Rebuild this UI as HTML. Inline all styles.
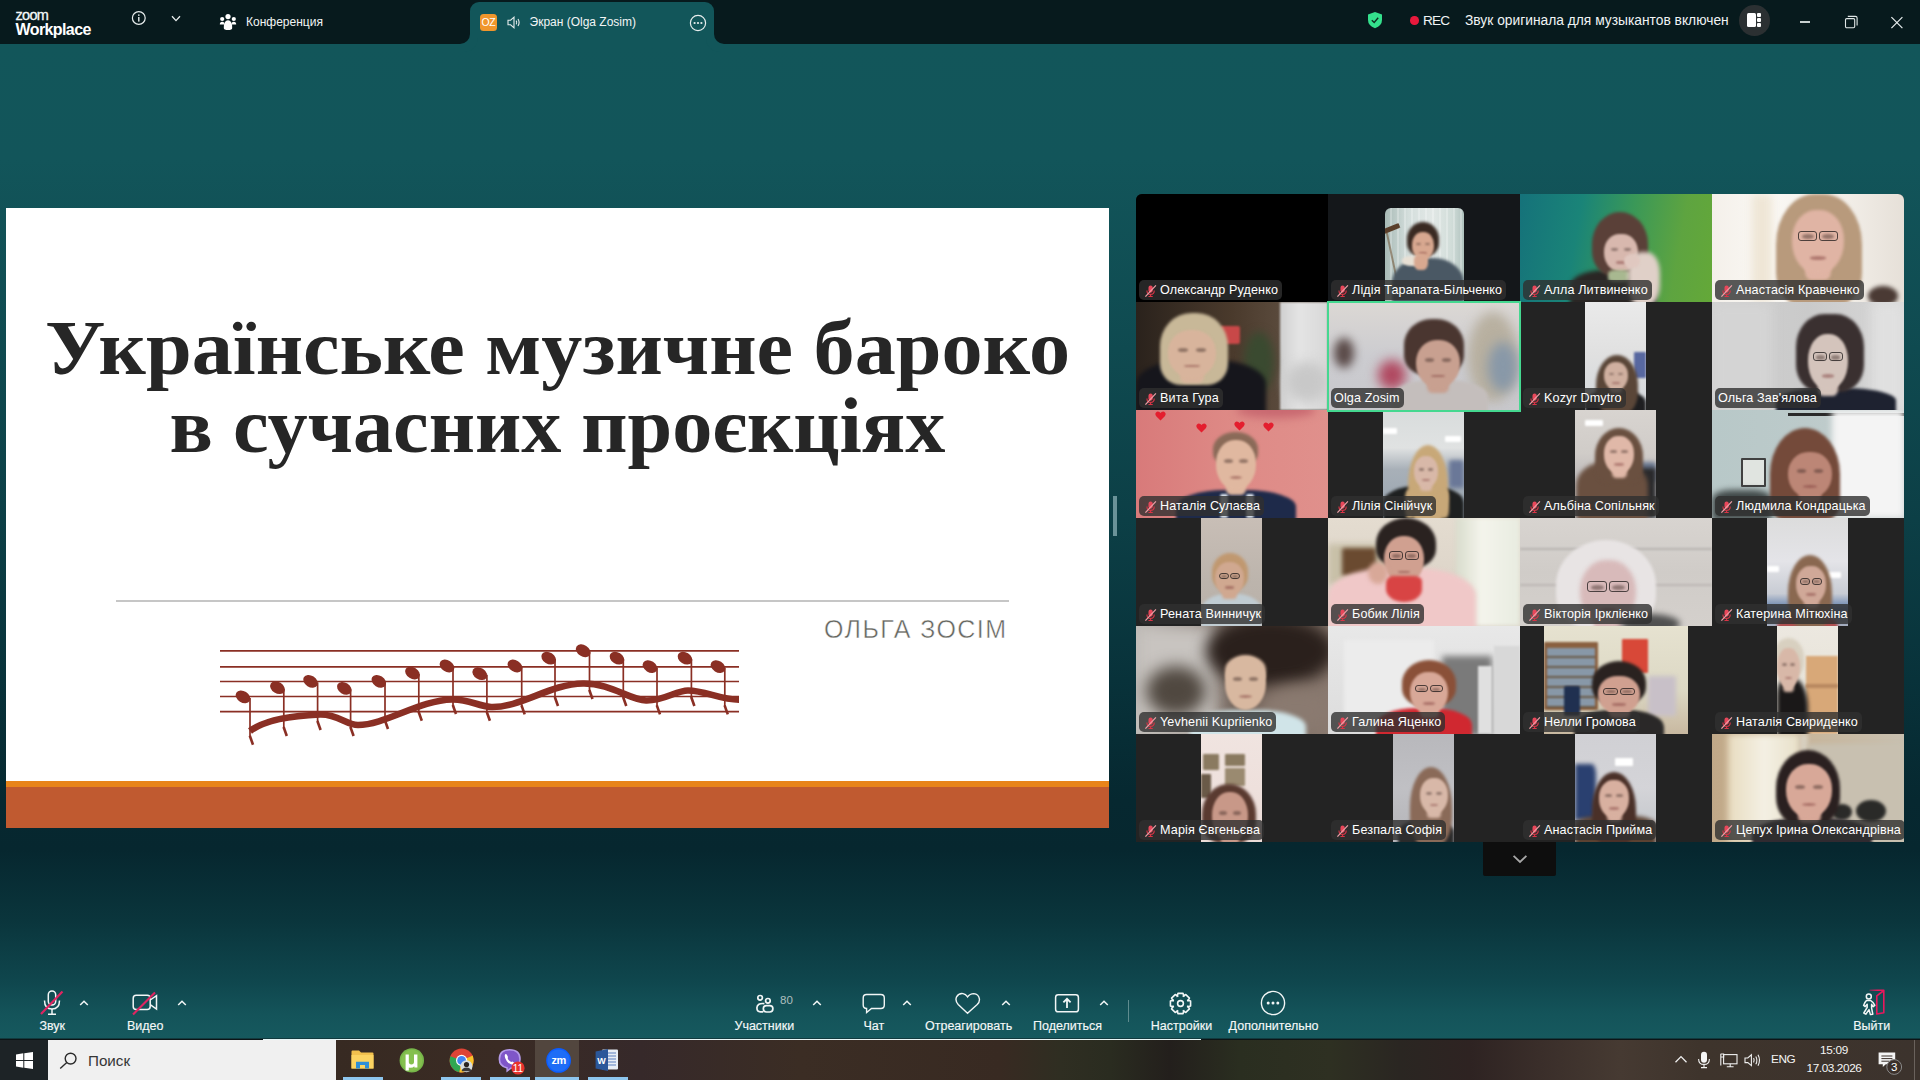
<!DOCTYPE html>
<html><head><meta charset="utf-8">
<style>
*{margin:0;padding:0;box-sizing:border-box}
html,body{width:1920px;height:1080px;overflow:hidden}
body{position:relative;font-family:"Liberation Sans",sans-serif;color:#fff;
background:linear-gradient(to bottom,#071a1d 0,#071a1d 44px,#12565a 44px,#12555a 160px,#0f4a50 350px,#0c3f46 520px,#08323a 680px,#062830 800px,#06272f 850px,#0a353c 920px,#0f464d 980px,#14545a 1015px,#16595e 1038px,#0d1b1e 1039px)}
.abs{position:absolute}
/* title bar */
#tb{left:0;top:0;width:1920px;height:44px;background:#071a1d}
#tab{left:470px;top:2px;width:244px;height:42px;background:#12565a;border-radius:9px 9px 0 0}
#tab:before,#tab:after{content:"";position:absolute;bottom:0;width:10px;height:10px;background:transparent}
#tab:before{left:-10px;border-bottom-right-radius:10px;box-shadow:4px 4px 0 4px #12565a}
#tab:after{right:-10px;border-bottom-left-radius:10px;box-shadow:-4px 4px 0 4px #12565a}
.t12{font-size:12px;line-height:14px;white-space:nowrap}
/* slide */
#slide{left:6px;top:208px;width:1103px;height:620px;background:#fff;overflow:hidden}
.tl1{font-family:"Liberation Serif",serif;font-weight:bold;color:#262626;text-align:center;white-space:nowrap}
#title{left:0;top:0;width:1103px;font-family:"Liberation Serif",serif;font-weight:bold;color:#262626;text-align:center;white-space:nowrap}
/* grid */
#grid{left:1136px;top:194px;width:768px;height:648px;border-radius:6px 6px 0 0;overflow:hidden;background:#222}
.tile{position:absolute;width:192px;height:108px;overflow:hidden}
.s{position:absolute}
.vid{position:absolute;top:0;height:108px;overflow:hidden}
.lbl{position:absolute;left:3px;top:86px;height:19.5px;background:rgba(48,48,48,.8);border-radius:5px;padding:0 4px 0 21px;font-size:12.6px;line-height:21px;letter-spacing:0.12px;color:#fff;white-space:nowrap}
.lbl.nm{padding-left:3px}
.mic{position:absolute;left:3px;top:2.5px;transform:scale(.85)}
/* toolbar */
.tl{font-size:12.5px;line-height:14px;-webkit-text-stroke:0.15px #f4f8f8;text-align:center;white-space:nowrap;color:#f4f8f8}
/* taskbar */
#task{left:0;top:1040px;width:1920px;height:40px;background:#352b24}
</style></head><body>
<div id="tb" class="abs">
<div class="abs" style="left:15.5px;top:7px;font-size:14.5px;line-height:16px;font-weight:normal;letter-spacing:-0.7px;color:#f4f8f8;-webkit-text-stroke:0.3px #f4f8f8">zoom</div>
<div class="abs" style="left:15.5px;top:20px;font-size:16px;line-height:20px;font-weight:bold;letter-spacing:-0.6px;color:#fff">Workplace</div>
<svg class="abs" style="left:131px;top:11px" width="16" height="15" viewBox="0 0 16 15"><circle cx="7.8" cy="7" r="6.4" fill="none" stroke="#e8eeee" stroke-width="1.2"/><rect x="7.1" y="6" width="1.4" height="4.6" fill="#e8eeee"/><rect x="7.1" y="3.4" width="1.4" height="1.5" fill="#e8eeee"/></svg>
<svg class="abs" style="left:170px;top:14px" width="12" height="9" viewBox="0 0 12 9"><path d="M2 2.2 L6 6.6 L10 2.2" fill="none" stroke="#e8eeee" stroke-width="1.3"/></svg>
<svg class="abs" style="left:219px;top:13px" width="18" height="18" viewBox="0 0 18 18" fill="#fff"><circle cx="9" cy="3.6" r="2.6"/><circle cx="3.2" cy="6" r="2.1"/><circle cx="14.8" cy="6" r="2.1"/><path d="M0.8 11.5 Q0.8 8.8 3.2 8.8 Q5.6 8.8 5.6 11.5 Z"/><path d="M12.4 11.5 Q12.4 8.8 14.8 8.8 Q17.2 8.8 17.2 11.5 Z"/><path d="M4.8 15 Q4.8 7.2 9 7.2 Q13.2 7.2 13.2 15 Q13.2 17 9 17 Q4.8 17 4.8 15Z"/></svg>
<div class="abs" style="left:246px;top:15px;font-size:12px;line-height:14px;color:#f2f5f5">Конференция</div>
<svg class="abs" style="left:1366px;top:11px" width="18" height="18" viewBox="0 0 18 18"><path d="M9 1 L16 3.6 L16 9 Q16 14.5 9 17.2 Q2 14.5 2 9 L2 3.6 Z" fill="#34e08c"/><path d="M5.8 9.2 L8.2 11.4 L12.2 6.8" fill="none" stroke="#0f2a20" stroke-width="1.4"/></svg>
<div class="abs" style="left:1410px;top:16px;width:8.5px;height:8.5px;border-radius:50%;background:#e8193c"></div>
<div class="abs" style="left:1423px;top:13px;font-size:13.6px;line-height:16px;letter-spacing:-0.8px;color:#f0f4f4">REC</div>
<div class="abs" style="left:1465px;top:13px;font-size:13.8px;line-height:16px;color:#f0f4f4">Звук оригинала для музыкантов включен</div>
<div class="abs" style="left:1739px;top:5px;width:30.5px;height:30.5px;border-radius:50%;background:#2b3032"></div>
<div class="abs" style="left:1747.3px;top:13.3px;width:8.7px;height:13.6px;border-radius:1.5px;background:#fff"></div>
<div class="abs" style="left:1757px;top:13.3px;width:4px;height:3.9px;border-radius:1px;background:#fff"></div>
<div class="abs" style="left:1757px;top:18.2px;width:4px;height:3.7px;border-radius:1px;background:#fff"></div>
<div class="abs" style="left:1757px;top:23.1px;width:4px;height:3.8px;border-radius:1px;background:#fff"></div>
<div class="abs" style="left:1800px;top:21.4px;width:10.4px;height:1.3px;background:#c8d0d0"></div>
<svg class="abs" style="left:1843px;top:14px" width="16" height="16" viewBox="0 0 16 16" fill="none" stroke="#dfe6e6" stroke-width="1.1"><rect x="2.5" y="4.6" width="9.2" height="9.2" rx="1.2"/><path d="M4.8 2.4 L12.4 2.4 Q14.1 2.4 14.1 4.1 L14.1 11.6"/></svg>
<svg class="abs" style="left:1890px;top:15.5px" width="14" height="14" viewBox="0 0 14 14" stroke="#e8eeee" stroke-width="1.2"><path d="M1.4 1.2 L12.4 12.2 M12.4 1.2 L1.4 12.2"/></svg>
</div>
<div id="tab" class="abs">
<div class="abs" style="left:10px;top:12.3px;width:17px;height:17px;border-radius:3.5px;background:#f0962c;font-size:10.5px;line-height:17px;text-align:center;color:#fff;letter-spacing:-0.3px">OZ</div>
<svg class="abs" style="left:37px;top:14px" width="14" height="13" viewBox="0 0 14 13" fill="none" stroke="#e8eeee" stroke-width="1.1"><path d="M1 4.2 L3.6 4.2 L7 1.2 L7 11.8 L3.6 8.8 L1 8.8 Z"/><path d="M9.2 4.6 Q10.4 6.5 9.2 8.4"/><path d="M11 3 Q13.2 6.5 11 10"/></svg>
<div class="abs" style="left:59.5px;top:13px;font-size:12px;line-height:14px;color:#f2f5f5">Экран (Olga Zosim)</div>
<svg class="abs" style="left:219px;top:11.5px" width="18" height="18" viewBox="0 0 18 18"><circle cx="9" cy="9" r="7.6" fill="none" stroke="#e8eeee" stroke-width="1.2"/><circle cx="5.6" cy="9" r="1.1" fill="#e8eeee"/><circle cx="9" cy="9" r="1.1" fill="#e8eeee"/><circle cx="12.4" cy="9" r="1.1" fill="#e8eeee"/></svg>
</div>

<div id="slide" class="abs">
<div class="abs tl1" style="left:0;top:101px;width:1103px;height:78px;line-height:78px;font-size:78px;transform:scaleX(1.054);transform-origin:551px 0">Українське музичне бароко</div>
<div class="abs tl1" style="left:0;top:179px;width:1103px;height:78px;line-height:78px;font-size:78px;transform:scaleX(1.029);transform-origin:553px 0">в сучасних проєкціях</div>
<div class="abs" style="left:109.5px;top:392.4px;width:893px;height:1.2px;background:#c6c6c6"></div>
<div class="abs" style="left:818px;top:406px;font-size:25px;line-height:30px;letter-spacing:1.45px;color:#65665f;-webkit-text-stroke:0.45px #fff;white-space:nowrap">ОЛЬГА ЗОСІМ</div>
<svg class="abs" style="left:0;top:0" width="1103" height="620" viewBox="6 208 1103 620">
<g stroke="#8a2f24" stroke-width="1.6">
<line x1="220" y1="650.9" x2="739" y2="650.9"/>
<line x1="220" y1="666.9" x2="739" y2="666.9"/>
<line x1="220" y1="681.5" x2="739" y2="681.5"/>
<line x1="220" y1="696.5" x2="739" y2="696.5"/>
<line x1="220" y1="711.6" x2="739" y2="711.6"/>
</g>
<path d="M250 731 C262 722 285 716 320 714.5 C338 714 346 725 358 725 C385 725 420 700 452 699.5 C468 699 478 706 491 707 C520 708 550 684 583 683.5 C610 683 630 700 646 700.5 C664 701 676 690.5 688 690.5 C705 690.5 720 699.7 739 699.7" fill="none" stroke="#8a2f24" stroke-width="6.6" stroke-linecap="butt"/>
<g fill="#8a2f24">
<ellipse cx="243" cy="696.9" rx="7.9" ry="5.7" transform="rotate(32 243 696.9)"/>
<ellipse cx="277.5" cy="687.7" rx="7.9" ry="5.7" transform="rotate(32 277.5 687.7)"/>
<ellipse cx="310.5" cy="681.4" rx="7.9" ry="5.7" transform="rotate(32 310.5 681.4)"/>
<ellipse cx="344.3" cy="688.4" rx="7.9" ry="5.7" transform="rotate(32 344.3 688.4)"/>
<ellipse cx="378.8" cy="681.4" rx="7.9" ry="5.7" transform="rotate(32 378.8 681.4)"/>
<ellipse cx="412.5" cy="673" rx="7.9" ry="5.7" transform="rotate(32 412.5 673)"/>
<ellipse cx="447" cy="666" rx="7.9" ry="5.7" transform="rotate(32 447 666)"/>
<ellipse cx="479.8" cy="673.7" rx="7.9" ry="5.7" transform="rotate(32 479.8 673.7)"/>
<ellipse cx="515" cy="666" rx="7.9" ry="5.7" transform="rotate(32 515 666)"/>
<ellipse cx="548.7" cy="658.2" rx="7.9" ry="5.7" transform="rotate(32 548.7 658.2)"/>
<ellipse cx="583.2" cy="650.75" rx="7.9" ry="5.7" transform="rotate(32 583.2 650.75)"/>
<ellipse cx="617" cy="658.2" rx="7.9" ry="5.7" transform="rotate(32 617 658.2)"/>
<ellipse cx="650" cy="666.6" rx="7.9" ry="5.7" transform="rotate(32 650 666.6)"/>
<ellipse cx="685" cy="658.2" rx="7.9" ry="5.7" transform="rotate(32 685 658.2)"/>
<ellipse cx="718" cy="666.6" rx="7.9" ry="5.7" transform="rotate(32 718 666.6)"/>
</g><g stroke="#8a2f24" fill="none">
<path d="M250 697.9 L250 736.7" stroke-width="1.7"/>
<line x1="249.8" y1="735.7" x2="253" y2="744.7" stroke-width="2.6"/>
<path d="M283.8 688.7 L283.8 728" stroke-width="1.7"/>
<line x1="283.6" y1="727" x2="286.8" y2="736" stroke-width="2.6"/>
<path d="M317.6 682.4 L317.6 722" stroke-width="1.7"/>
<line x1="317.40000000000003" y1="721" x2="320.6" y2="730" stroke-width="2.6"/>
<path d="M350.6 689.4 L350.6 728" stroke-width="1.7"/>
<line x1="350.40000000000003" y1="727" x2="353.6" y2="736" stroke-width="2.6"/>
<path d="M385 682.4 L385 721" stroke-width="1.7"/>
<line x1="384.8" y1="720" x2="388" y2="729" stroke-width="2.6"/>
<path d="M418.8 674 L418.8 712.8" stroke-width="1.7"/>
<line x1="418.6" y1="711.8" x2="421.8" y2="720.8" stroke-width="2.6"/>
<path d="M453 667 L453 706" stroke-width="1.7"/>
<line x1="452.8" y1="705" x2="456" y2="714" stroke-width="2.6"/>
<path d="M486.9 674.7 L486.9 712.8" stroke-width="1.7"/>
<line x1="486.7" y1="711.8" x2="489.9" y2="720.8" stroke-width="2.6"/>
<path d="M521.7 667 L521.7 706.4" stroke-width="1.7"/>
<line x1="521.5" y1="705.4" x2="524.7" y2="714.4" stroke-width="2.6"/>
<path d="M555 659.2 L555 698" stroke-width="1.7"/>
<line x1="554.8" y1="697" x2="558" y2="706" stroke-width="2.6"/>
<path d="M589.5 651.75 L589.5 691" stroke-width="1.7"/>
<line x1="589.3" y1="690" x2="592.5" y2="699" stroke-width="2.6"/>
<path d="M623.3 659.2 L623.3 698" stroke-width="1.7"/>
<line x1="623.0999999999999" y1="697" x2="626.3" y2="706" stroke-width="2.6"/>
<path d="M657 667.6 L657 706.4" stroke-width="1.7"/>
<line x1="656.8" y1="705.4" x2="660" y2="714.4" stroke-width="2.6"/>
<path d="M691.4 659.2 L691.4 698" stroke-width="1.7"/>
<line x1="691.1999999999999" y1="697" x2="694.4" y2="706" stroke-width="2.6"/>
<path d="M724.8 667.6 L724.8 706.4" stroke-width="1.7"/>
<line x1="724.5999999999999" y1="705.4" x2="727.8" y2="714.4" stroke-width="2.6"/>
</g></svg>
<div class="abs" style="left:0;top:573px;width:1103px;height:6px;background:#e8841a"></div>
<div class="abs" style="left:0;top:579px;width:1103px;height:41px;background:#c05a30"></div>
</div>
<div id="grid" class="abs"><div class="tile" style="left:0px;top:0px;background:#000;"><div class="lbl"><svg class="mic" width="16" height="16" viewBox="0 0 16 16"><rect x="6.2" y="1.6" width="5" height="8.4" rx="2.5" fill="#e8475a"/><path d="M4.4 7.4 Q4.4 12 8.7 12 Q13 12 13 7.4 M8.7 12 L8.7 14.2 M6.2 14.4 L11.2 14.4" fill="none" stroke="#d93446" stroke-width="1.3"/><path d="M2.6 14.6 L15 1.4" stroke="#f0a0a8" stroke-width="1.4"/></svg><span>Олександр Руденко</span></div></div><div class="tile" style="left:192px;top:0px;background:#14171a;"><div class="vid" style="left:56.6px;top:14.4px;width:79.4px;height:93.6px;border-radius:6px 6px 0 0;background:linear-gradient(to right,#a8bab6,#d4dedc 30%,#e2e8e6 60%,#d0dcd8 85%,#b0c2be)"><div class="s" style="left:0px;top:0px;width:79px;height:100px;background:repeating-linear-gradient(to right,rgba(255,255,255,0) 0 5px,rgba(255,255,255,.25) 5px 7px);border-radius:0;"></div><div class="s" style="left:-2px;top:18px;width:17px;height:5px;background:#5a3e2a;border-radius:1px;filter:blur(0.5px);transform:rotate(-22deg)"></div><div class="s" style="left:6px;top:24px;width:1.8px;height:50px;background:rgba(110,80,50,.55);border-radius:0;filter:blur(0.5px);transform:rotate(-12deg)"></div><div class="s" style="left:7.4px;top:49.6px;width:72px;height:60px;background:#4a5864;border-radius:42% 42% 0 0;filter:blur(1.5px);"></div><div class="s" style="left:22.4px;top:13.6px;width:32px;height:34px;background:#3a2a22;border-radius:50% 50% 38% 38%;filter:blur(1.5px);"></div><div class="s" style="left:27.4px;top:23.6px;width:22px;height:28px;background:#d8a890;border-radius:46% 46% 50% 50%;filter:blur(1.2px);"></div><div class="s" style="left:31.799999999999997px;top:34.24px;width:4.84px;height:2.24px;background:rgba(60,40,35,.45);border-radius:50%;filter:blur(0.8px);"></div><div class="s" style="left:40.16px;top:34.24px;width:4.84px;height:2.24px;background:rgba(60,40,35,.45);border-radius:50%;filter:blur(0.8px);"></div><div class="s" style="left:34.879999999999995px;top:43.760000000000005px;width:7.04px;height:1.68px;background:rgba(120,50,50,.45);border-radius:50%;filter:blur(0.8px);"></div><div class="s" style="left:17.4px;top:47.6px;width:24px;height:10px;background:#e8e0d4;border-radius:40%;filter:blur(1px);"></div><div class="s" style="left:29.4px;top:45.6px;width:14px;height:16px;background:#d8a890;border-radius:40%;filter:blur(1px);"></div></div><div class="lbl"><svg class="mic" width="16" height="16" viewBox="0 0 16 16"><rect x="6.2" y="1.6" width="5" height="8.4" rx="2.5" fill="#e8475a"/><path d="M4.4 7.4 Q4.4 12 8.7 12 Q13 12 13 7.4 M8.7 12 L8.7 14.2 M6.2 14.4 L11.2 14.4" fill="none" stroke="#d93446" stroke-width="1.3"/><path d="M2.6 14.6 L15 1.4" stroke="#f0a0a8" stroke-width="1.4"/></svg><span>Лідія Тарапата-Більченко</span></div></div><div class="tile" style="left:384px;top:0px;background:linear-gradient(100deg,#15727a 0%,#1a8478 30%,#3a9858 55%,#5ea440 80%,#64a838 100%);"><div class="s" style="left:50px;top:76px;width:86px;height:40px;background:#2a2624;border-radius:40% 40% 0 0;filter:blur(2px);"></div><div class="s" style="left:72px;top:18px;width:56px;height:64px;background:#5a4038;border-radius:50% 50% 38% 38%;filter:blur(1.5px);"></div><div class="s" style="left:84px;top:40px;width:34px;height:38px;background:#d8b8ae;border-radius:46% 46% 50% 50%;filter:blur(1.2px);"></div><div class="s" style="left:90.8px;top:54.44px;width:7.48px;height:3.04px;background:rgba(60,40,35,.45);border-radius:50%;filter:blur(0.8px);"></div><div class="s" style="left:103.72px;top:54.44px;width:7.48px;height:3.04px;background:rgba(60,40,35,.45);border-radius:50%;filter:blur(0.8px);"></div><div class="s" style="left:95.56px;top:67.36px;width:10.88px;height:2.28px;background:rgba(120,50,50,.45);border-radius:50%;filter:blur(0.8px);"></div><div class="s" style="left:88px;top:76px;width:22px;height:12px;background:#a8b890;border-radius:30%;filter:blur(1.5px);"></div><div class="s" style="left:108px;top:58px;width:32px;height:54px;background:#e0d0c8;border-radius:40%;filter:blur(2px);"></div><div class="s" style="left:104px;top:60px;width:16px;height:14px;background:#e0c8c0;border-radius:50%;filter:blur(1.2px);"></div><div class="lbl"><svg class="mic" width="16" height="16" viewBox="0 0 16 16"><rect x="6.2" y="1.6" width="5" height="8.4" rx="2.5" fill="#e8475a"/><path d="M4.4 7.4 Q4.4 12 8.7 12 Q13 12 13 7.4 M8.7 12 L8.7 14.2 M6.2 14.4 L11.2 14.4" fill="none" stroke="#d93446" stroke-width="1.3"/><path d="M2.6 14.6 L15 1.4" stroke="#f0a0a8" stroke-width="1.4"/></svg><span>Алла Литвиненко</span></div></div><div class="tile" style="left:576px;top:0px;background:linear-gradient(to right,#f4f0ea,#faf8f4 30%,#f2eee8 70%,#e6e0d8);"><div class="s" style="left:40px;top:0px;width:20px;height:108px;background:#efe6d6;border-radius:0;filter:blur(4px);"></div><div class="s" style="left:156px;top:92px;width:30px;height:20px;background:#4a3a34;border-radius:50%;filter:blur(2px);"></div><div class="s" style="left:64px;top:0px;width:86px;height:112px;background:#b89a7c;border-radius:45% 45% 30% 30%;filter:blur(1.5px);"></div><div class="s" style="left:93.0px;top:54.4px;width:26.0px;height:32.0px;background:#e0b4a4;border-radius:25%;filter:blur(1.5px);"></div><div class="s" style="left:80px;top:16px;width:52px;height:64px;background:#e0b4a4;border-radius:46% 46% 50% 50%;filter:blur(1.5px);"></div><div class="s" style="left:90.4px;top:40.32px;width:11.44px;height:5.12px;background:rgba(60,40,35,.45);border-radius:50%;filter:blur(0.8px);"></div><div class="s" style="left:110.16px;top:40.32px;width:11.44px;height:5.12px;background:rgba(60,40,35,.45);border-radius:50%;filter:blur(0.8px);"></div><div class="s" style="left:97.68px;top:62.08px;width:16.64px;height:3.84px;background:rgba(120,50,50,.45);border-radius:50%;filter:blur(0.8px);"></div><div class="s" style="left:86.2px;top:36.5px;width:18.7px;height:10.9px;border:1.2px solid rgba(30,25,25,.75);border-radius:3px"></div><div class="s" style="left:107.0px;top:36.5px;width:18.7px;height:10.9px;border:1.2px solid rgba(30,25,25,.75);border-radius:3px"></div><div class="lbl"><svg class="mic" width="16" height="16" viewBox="0 0 16 16"><rect x="6.2" y="1.6" width="5" height="8.4" rx="2.5" fill="#e8475a"/><path d="M4.4 7.4 Q4.4 12 8.7 12 Q13 12 13 7.4 M8.7 12 L8.7 14.2 M6.2 14.4 L11.2 14.4" fill="none" stroke="#d93446" stroke-width="1.3"/><path d="M2.6 14.6 L15 1.4" stroke="#f0a0a8" stroke-width="1.4"/></svg><span>Анастасія Кравченко</span></div></div><div class="tile" style="left:0px;top:108px;background:linear-gradient(to right,#2a221c,#4a3a2c 50%,#5a4a3c 75%,#3a2e24);"><div class="s" style="left:144px;top:0px;width:48px;height:108px;background:linear-gradient(to right,#d0d0d0,#e4e4e4 40%,#d8d8d8);border-radius:0;filter:blur(1px);"></div><div class="s" style="left:150px;top:60px;width:42px;height:40px;background:#c8c8c8;border-radius:50%;filter:blur(6px);"></div><div class="s" style="left:84px;top:24px;width:20px;height:18px;background:#c84848;border-radius:2px;filter:blur(1px);"></div><div class="s" style="left:108px;top:30px;width:30px;height:60px;background:#3a4a30;border-radius:50%;filter:blur(4px);"></div><div class="s" style="left:0px;top:58px;width:130px;height:60px;background:#16161c;border-radius:40% 40% 0 0;filter:blur(2px);"></div><div class="s" style="left:24px;top:11px;width:68px;height:72px;background:#c8b898;border-radius:46% 46% 30% 30%;filter:blur(1.5px);"></div><div class="s" style="left:44.0px;top:56.8px;width:24.0px;height:24.0px;background:#d8b49c;border-radius:25%;filter:blur(1.5px);"></div><div class="s" style="left:32px;top:28px;width:48px;height:48px;background:#d8b49c;border-radius:46% 46% 50% 50%;filter:blur(1.2px);"></div><div class="s" style="left:41.6px;top:46.24px;width:10.56px;height:3.84px;background:rgba(60,40,35,.45);border-radius:50%;filter:blur(0.8px);"></div><div class="s" style="left:59.839999999999996px;top:46.24px;width:10.56px;height:3.84px;background:rgba(60,40,35,.45);border-radius:50%;filter:blur(0.8px);"></div><div class="s" style="left:48.32px;top:62.56px;width:15.36px;height:2.88px;background:rgba(120,50,50,.45);border-radius:50%;filter:blur(0.8px);"></div><div class="lbl"><svg class="mic" width="16" height="16" viewBox="0 0 16 16"><rect x="6.2" y="1.6" width="5" height="8.4" rx="2.5" fill="#e8475a"/><path d="M4.4 7.4 Q4.4 12 8.7 12 Q13 12 13 7.4 M8.7 12 L8.7 14.2 M6.2 14.4 L11.2 14.4" fill="none" stroke="#d93446" stroke-width="1.3"/><path d="M2.6 14.6 L15 1.4" stroke="#f0a0a8" stroke-width="1.4"/></svg><span>Вита Гура</span></div></div><div class="tile" style="left:192px;top:108px;background:linear-gradient(to bottom,#dcd8d4,#ccccd0 50%,#c8c8cc);"><div class="s" style="left:6px;top:36px;width:20px;height:30px;background:#5a4a48;border-radius:50%;filter:blur(5px);"></div><div class="s" style="left:50px;top:58px;width:28px;height:30px;background:#b04860;border-radius:50%;filter:blur(6px);"></div><div class="s" style="left:140px;top:10px;width:50px;height:90px;background:#b8b0a0;border-radius:50%;filter:blur(6px);"></div><div class="s" style="left:160px;top:40px;width:30px;height:50px;background:#8898a8;border-radius:50%;filter:blur(6px);"></div><div class="s" style="left:64px;top:78px;width:96px;height:40px;background:#c4bebc;border-radius:42% 42% 0 0;filter:blur(1.5px);"></div><div class="s" style="left:76px;top:17px;width:60px;height:56px;background:#4a3630;border-radius:46% 46% 35% 35%;filter:blur(1.5px);"></div><div class="s" style="left:99.0px;top:66.8px;width:22.0px;height:24.0px;background:#c8a090;border-radius:25%;filter:blur(1.5px);"></div><div class="s" style="left:88px;top:38px;width:44px;height:48px;background:#c8a090;border-radius:46% 46% 50% 50%;filter:blur(1.2px);"></div><div class="s" style="left:96.8px;top:56.24px;width:9.68px;height:3.84px;background:rgba(60,40,35,.45);border-radius:50%;filter:blur(0.8px);"></div><div class="s" style="left:113.52px;top:56.24px;width:9.68px;height:3.84px;background:rgba(60,40,35,.45);border-radius:50%;filter:blur(0.8px);"></div><div class="s" style="left:102.96000000000001px;top:72.56px;width:14.08px;height:2.88px;background:rgba(120,50,50,.45);border-radius:50%;filter:blur(0.8px);"></div><div class="lbl nm"><span>Olga Zosim</span></div></div><div class="tile" style="left:384px;top:108px;background:#232323;"><div class="vid" style="left:65px;top:0px;width:61px;height:108px;border-radius:0;background:linear-gradient(to bottom,#eaeaea,#e0e0e0 50%,#d4d8dc)"><div class="s" style="left:49px;top:50px;width:12px;height:26px;background:#5868a0;border-radius:1px;filter:blur(1px);"></div><div class="s" style="left:0px;top:88px;width:61px;height:30px;background:#1e1e20;border-radius:42% 42% 0 0;filter:blur(1.5px);"></div><div class="s" style="left:11px;top:53px;width:42px;height:60px;background:#5a4638;border-radius:50% 50% 38% 38%;filter:blur(1.5px);"></div><div class="s" style="left:25.0px;top:76.8px;width:12.0px;height:14.0px;background:#d0b0a0;border-radius:25%;filter:blur(1.5px);"></div><div class="s" style="left:19px;top:60px;width:24px;height:28px;background:#d0b0a0;border-radius:46% 46% 50% 50%;filter:blur(1.2px);"></div><div class="s" style="left:23.8px;top:70.64px;width:5.28px;height:2.24px;background:rgba(60,40,35,.45);border-radius:50%;filter:blur(0.8px);"></div><div class="s" style="left:32.92px;top:70.64px;width:5.28px;height:2.24px;background:rgba(60,40,35,.45);border-radius:50%;filter:blur(0.8px);"></div><div class="s" style="left:27.16px;top:80.16px;width:7.68px;height:1.68px;background:rgba(120,50,50,.45);border-radius:50%;filter:blur(0.8px);"></div></div><div class="lbl"><svg class="mic" width="16" height="16" viewBox="0 0 16 16"><rect x="6.2" y="1.6" width="5" height="8.4" rx="2.5" fill="#e8475a"/><path d="M4.4 7.4 Q4.4 12 8.7 12 Q13 12 13 7.4 M8.7 12 L8.7 14.2 M6.2 14.4 L11.2 14.4" fill="none" stroke="#d93446" stroke-width="1.3"/><path d="M2.6 14.6 L15 1.4" stroke="#f0a0a8" stroke-width="1.4"/></svg><span>Kozyr Dmytro</span></div></div><div class="tile" style="left:576px;top:108px;background:linear-gradient(to right,#d0d0d0,#cacaca 50%,#d8d8d8);"><div class="s" style="left:0px;top:0px;width:60px;height:108px;background:#d4d4d4;border-radius:0;filter:blur(6px);"></div><div class="s" style="left:160px;top:0px;width:32px;height:108px;background:#e0e0e0;border-radius:0;filter:blur(6px);"></div><div class="s" style="left:64px;top:86px;width:120px;height:30px;background:#1e2230;border-radius:42% 42% 0 0;filter:blur(1.5px);"></div><div class="s" style="left:84px;top:12px;width:68px;height:78px;background:#3a3030;border-radius:42% 42% 35% 35%;filter:blur(1.5px);"></div><div class="s" style="left:106.0px;top:65.6px;width:20.0px;height:28.0px;background:#d4c4bc;border-radius:25%;filter:blur(1.5px);"></div><div class="s" style="left:96px;top:32px;width:40px;height:56px;background:#d4c4bc;border-radius:46% 46% 50% 50%;filter:blur(1.2px);"></div><div class="s" style="left:104.0px;top:53.28px;width:8.8px;height:4.48px;background:rgba(60,40,35,.45);border-radius:50%;filter:blur(0.8px);"></div><div class="s" style="left:119.2px;top:53.28px;width:8.8px;height:4.48px;background:rgba(60,40,35,.45);border-radius:50%;filter:blur(0.8px);"></div><div class="s" style="left:109.6px;top:72.32px;width:12.8px;height:3.36px;background:rgba(120,50,50,.45);border-radius:50%;filter:blur(0.8px);"></div><div class="s" style="left:100.8px;top:49.9px;width:14.4px;height:9.5px;border:1.2px solid rgba(30,25,25,.75);border-radius:3px"></div><div class="s" style="left:116.8px;top:49.9px;width:14.4px;height:9.5px;border:1.2px solid rgba(30,25,25,.75);border-radius:3px"></div><div class="lbl nm"><span>Ольга Зав'ялова</span></div></div><div class="tile" style="left:0px;top:216px;background:linear-gradient(to right,#d87a7a,#de8a86 50%,#e0908c);"><div class="s" style="left:100px;top:-8px;width:80px;height:16px;background:#c86870;border-radius:50%;filter:blur(4px);"></div><div class="s" style="left:40px;top:80px;width:120px;height:40px;background:#1e2a4a;border-radius:42% 42% 0 0;filter:blur(1.5px);"></div><div class="s" style="left:77px;top:22px;width:45px;height:34px;background:#8a6a58;border-radius:50% 50% 38% 38%;filter:blur(1.5px);"></div><div class="s" style="left:90.0px;top:60.0px;width:20.0px;height:25.0px;background:#e0b8a0;border-radius:25%;filter:blur(1.5px);"></div><div class="s" style="left:80px;top:30px;width:40px;height:50px;background:#e0b8a0;border-radius:46% 46% 50% 50%;filter:blur(1.2px);"></div><div class="s" style="left:88.0px;top:49.0px;width:8.8px;height:4.0px;background:rgba(60,40,35,.45);border-radius:50%;filter:blur(0.8px);"></div><div class="s" style="left:103.2px;top:49.0px;width:8.8px;height:4.0px;background:rgba(60,40,35,.45);border-radius:50%;filter:blur(0.8px);"></div><div class="s" style="left:93.6px;top:66.0px;width:12.8px;height:3.0px;background:rgba(120,50,50,.45);border-radius:50%;filter:blur(0.8px);"></div><div class="s" style="left:84px;top:84px;width:8px;height:24px;background:#e0e8f0;border-radius:20%;filter:blur(1px);"></div><div class="s" style="left:110px;top:84px;width:8px;height:24px;background:#e0e8f0;border-radius:20%;filter:blur(1px);"></div><svg class="s" style="left:19px;top:0.5px" width="11" height="10" viewBox="0 0 11 10"><path d="M5.5 9.4 L1.2 5.2 Q-0.4 3.2 1 1.4 Q2.6 -0.2 4.4 1 L5.5 2 L6.6 1 Q8.4 -0.2 10 1.4 Q11.4 3.2 9.8 5.2 Z" fill="#e41e2e"/></svg><svg class="s" style="left:60px;top:12.5px" width="11" height="10" viewBox="0 0 11 10"><path d="M5.5 9.4 L1.2 5.2 Q-0.4 3.2 1 1.4 Q2.6 -0.2 4.4 1 L5.5 2 L6.6 1 Q8.4 -0.2 10 1.4 Q11.4 3.2 9.8 5.2 Z" fill="#e41e2e"/></svg><svg class="s" style="left:98px;top:10.5px" width="11" height="10" viewBox="0 0 11 10"><path d="M5.5 9.4 L1.2 5.2 Q-0.4 3.2 1 1.4 Q2.6 -0.2 4.4 1 L5.5 2 L6.6 1 Q8.4 -0.2 10 1.4 Q11.4 3.2 9.8 5.2 Z" fill="#e41e2e"/></svg><svg class="s" style="left:127px;top:11.5px" width="11" height="10" viewBox="0 0 11 10"><path d="M5.5 9.4 L1.2 5.2 Q-0.4 3.2 1 1.4 Q2.6 -0.2 4.4 1 L5.5 2 L6.6 1 Q8.4 -0.2 10 1.4 Q11.4 3.2 9.8 5.2 Z" fill="#e41e2e"/></svg><div class="lbl"><svg class="mic" width="16" height="16" viewBox="0 0 16 16"><rect x="6.2" y="1.6" width="5" height="8.4" rx="2.5" fill="#e8475a"/><path d="M4.4 7.4 Q4.4 12 8.7 12 Q13 12 13 7.4 M8.7 12 L8.7 14.2 M6.2 14.4 L11.2 14.4" fill="none" stroke="#d93446" stroke-width="1.3"/><path d="M2.6 14.6 L15 1.4" stroke="#f0a0a8" stroke-width="1.4"/></svg><span>Наталія Сулаєва</span></div></div><div class="tile" style="left:192px;top:216px;background:#232323;"><div class="vid" style="left:55px;top:0px;width:81px;height:108px;border-radius:0;background:linear-gradient(to bottom,#d8dcdc,#e0e2e2 35%,#a8b0b8 55%,#98a4b0)"><div class="s" style="left:0px;top:18px;width:14px;height:6px;background:#fff;border-radius:1px;filter:blur(1px);"></div><div class="s" style="left:62px;top:26px;width:16px;height:6px;background:#fff;border-radius:1px;filter:blur(1px);"></div><div class="s" style="left:66px;top:50px;width:15px;height:28px;background:#6a7898;border-radius:2px;filter:blur(2px);"></div><div class="s" style="left:0px;top:76px;width:81px;height:40px;background:#1e2020;border-radius:42% 42% 0 0;filter:blur(1.5px);"></div><div class="s" style="left:25px;top:35px;width:40px;height:80px;background:#c8a878;border-radius:50% 50% 38% 38%;filter:blur(1.5px);"></div><div class="s" style="left:37.0px;top:65.2px;width:12.0px;height:16.0px;background:#d8b8a8;border-radius:25%;filter:blur(1.5px);"></div><div class="s" style="left:31px;top:46px;width:24px;height:32px;background:#d8b8a8;border-radius:46% 46% 50% 50%;filter:blur(1.2px);"></div><div class="s" style="left:35.8px;top:58.16px;width:5.28px;height:2.56px;background:rgba(60,40,35,.45);border-radius:50%;filter:blur(0.8px);"></div><div class="s" style="left:44.92px;top:58.16px;width:5.28px;height:2.56px;background:rgba(60,40,35,.45);border-radius:50%;filter:blur(0.8px);"></div><div class="s" style="left:39.16px;top:69.03999999999999px;width:7.68px;height:1.92px;background:rgba(120,50,50,.45);border-radius:50%;filter:blur(0.8px);"></div><div class="s" style="left:22px;top:80px;width:10px;height:28px;background:#c8a878;border-radius:30%;filter:blur(1.5px);"></div><div class="s" style="left:56px;top:80px;width:10px;height:28px;background:#c8a878;border-radius:30%;filter:blur(1.5px);"></div></div><div class="lbl"><svg class="mic" width="16" height="16" viewBox="0 0 16 16"><rect x="6.2" y="1.6" width="5" height="8.4" rx="2.5" fill="#e8475a"/><path d="M4.4 7.4 Q4.4 12 8.7 12 Q13 12 13 7.4 M8.7 12 L8.7 14.2 M6.2 14.4 L11.2 14.4" fill="none" stroke="#d93446" stroke-width="1.3"/><path d="M2.6 14.6 L15 1.4" stroke="#f0a0a8" stroke-width="1.4"/></svg><span>Лілія Сінійчук</span></div></div><div class="tile" style="left:384px;top:216px;background:#232323;"><div class="vid" style="left:55px;top:0px;width:81px;height:108px;border-radius:0;background:linear-gradient(to bottom,#d8d4d0,#d0ccc8 40%,#c0bcbc 60%,#b0b4b8)"><div class="s" style="left:10px;top:10px;width:18px;height:6px;background:#fff;border-radius:1px;filter:blur(1px);"></div><div class="s" style="left:60px;top:52px;width:21px;height:20px;background:#6a7890;border-radius:2px;filter:blur(2px);"></div><div class="s" style="left:40px;top:58px;width:41px;height:50px;background:#2a2a2c;border-radius:40% 0 0 0;filter:blur(2px);"></div><div class="s" style="left:1px;top:52px;width:72px;height:60px;background:#6a5040;border-radius:40% 40% 10% 10%;filter:blur(2px);"></div><div class="s" style="left:20px;top:18px;width:48px;height:56px;background:#6a5040;border-radius:50% 50% 30% 30%;filter:blur(1.5px);"></div><div class="s" style="left:36.5px;top:48.8px;width:15.0px;height:19.0px;background:#e0b8a8;border-radius:25%;filter:blur(1.5px);"></div><div class="s" style="left:29px;top:26px;width:30px;height:38px;background:#e0b8a8;border-radius:46% 46% 50% 50%;filter:blur(1.2px);"></div><div class="s" style="left:35.0px;top:40.44px;width:6.6px;height:3.04px;background:rgba(60,40,35,.45);border-radius:50%;filter:blur(0.8px);"></div><div class="s" style="left:46.4px;top:40.44px;width:6.6px;height:3.04px;background:rgba(60,40,35,.45);border-radius:50%;filter:blur(0.8px);"></div><div class="s" style="left:39.2px;top:53.36px;width:9.6px;height:2.28px;background:rgba(120,50,50,.45);border-radius:50%;filter:blur(0.8px);"></div></div><div class="lbl"><svg class="mic" width="16" height="16" viewBox="0 0 16 16"><rect x="6.2" y="1.6" width="5" height="8.4" rx="2.5" fill="#e8475a"/><path d="M4.4 7.4 Q4.4 12 8.7 12 Q13 12 13 7.4 M8.7 12 L8.7 14.2 M6.2 14.4 L11.2 14.4" fill="none" stroke="#d93446" stroke-width="1.3"/><path d="M2.6 14.6 L15 1.4" stroke="#f0a0a8" stroke-width="1.4"/></svg><span>Альбіна Сопільняк</span></div></div><div class="tile" style="left:576px;top:216px;background:linear-gradient(to right,#b8c8c8,#bccaca 50%,#c8d0d0);"><div class="s" style="left:76px;top:3px;width:116px;height:2.5px;background:#2a2a2a;border-radius:0;filter:blur(0.5px);"></div><div class="s" style="left:120px;top:0px;width:72px;height:108px;background:#f4f4f4;border-radius:0;filter:blur(3px);"></div><div class="s" style="left:29px;top:48px;width:25px;height:29px;background:#e0e4e0;border-radius:1px;filter:blur(0.4px);border:2px solid #404040"></div><div class="s" style="left:0px;top:80px;width:60px;height:30px;background:#404848;border-radius:30% 30% 0 0;filter:blur(3px);"></div><div class="s" style="left:58px;top:18px;width:70px;height:92px;background:#744a3a;border-radius:50% 50% 20% 20%;filter:blur(1.5px);"></div><div class="s" style="left:87.0px;top:69.6px;width:22.0px;height:23.0px;background:#bc8676;border-radius:25%;filter:blur(1.5px);"></div><div class="s" style="left:76px;top:42px;width:44px;height:46px;background:#bc8676;border-radius:46% 46% 50% 50%;filter:blur(1.2px);"></div><div class="s" style="left:84.8px;top:59.480000000000004px;width:9.68px;height:3.68px;background:rgba(60,40,35,.45);border-radius:50%;filter:blur(0.8px);"></div><div class="s" style="left:101.52px;top:59.480000000000004px;width:9.68px;height:3.68px;background:rgba(60,40,35,.45);border-radius:50%;filter:blur(0.8px);"></div><div class="s" style="left:90.96000000000001px;top:75.12px;width:14.08px;height:2.76px;background:rgba(120,50,50,.45);border-radius:50%;filter:blur(0.8px);"></div><div class="lbl"><svg class="mic" width="16" height="16" viewBox="0 0 16 16"><rect x="6.2" y="1.6" width="5" height="8.4" rx="2.5" fill="#e8475a"/><path d="M4.4 7.4 Q4.4 12 8.7 12 Q13 12 13 7.4 M8.7 12 L8.7 14.2 M6.2 14.4 L11.2 14.4" fill="none" stroke="#d93446" stroke-width="1.3"/><path d="M2.6 14.6 L15 1.4" stroke="#f0a0a8" stroke-width="1.4"/></svg><span>Людмила Кондрацька</span></div></div><div class="tile" style="left:0px;top:324px;background:#232323;"><div class="vid" style="left:65px;top:0px;width:61px;height:108px;border-radius:0;background:linear-gradient(to bottom,#c8beb6,#bcb4ac 60%,#b8b0a8)"><div class="s" style="left:0px;top:76px;width:61px;height:40px;background:#c0ccd2;border-radius:42% 42% 0 0;filter:blur(1.5px);"></div><div class="s" style="left:11px;top:35px;width:36px;height:37px;background:#c09870;border-radius:50% 50% 38% 38%;filter:blur(1.5px);"></div><div class="s" style="left:21.25px;top:64.4px;width:14.5px;height:17.0px;background:#d0a890;border-radius:25%;filter:blur(1.5px);"></div><div class="s" style="left:14px;top:44px;width:29px;height:34px;background:#d0a890;border-radius:46% 46% 50% 50%;filter:blur(1.2px);"></div><div class="s" style="left:19.8px;top:56.92px;width:6.38px;height:2.72px;background:rgba(60,40,35,.45);border-radius:50%;filter:blur(0.8px);"></div><div class="s" style="left:30.82px;top:56.92px;width:6.38px;height:2.72px;background:rgba(60,40,35,.45);border-radius:50%;filter:blur(0.8px);"></div><div class="s" style="left:23.86px;top:68.48px;width:9.28px;height:2.04px;background:rgba(120,50,50,.45);border-radius:50%;filter:blur(0.8px);"></div><div class="s" style="left:17.5px;top:54.9px;width:10.4px;height:5.8px;border:1.2px solid rgba(30,25,25,.75);border-radius:3px"></div><div class="s" style="left:29.1px;top:54.9px;width:10.4px;height:5.8px;border:1.2px solid rgba(30,25,25,.75);border-radius:3px"></div></div><div class="lbl"><svg class="mic" width="16" height="16" viewBox="0 0 16 16"><rect x="6.2" y="1.6" width="5" height="8.4" rx="2.5" fill="#e8475a"/><path d="M4.4 7.4 Q4.4 12 8.7 12 Q13 12 13 7.4 M8.7 12 L8.7 14.2 M6.2 14.4 L11.2 14.4" fill="none" stroke="#d93446" stroke-width="1.3"/><path d="M2.6 14.6 L15 1.4" stroke="#f0a0a8" stroke-width="1.4"/></svg><span>Рената Винничук</span></div></div><div class="tile" style="left:192px;top:324px;background:linear-gradient(to bottom,#e4dcd0,#d8d0c4);"><div class="s" style="left:0px;top:26px;width:70px;height:40px;background:#c8c0a8;border-radius:0;filter:blur(3px);"></div><div class="s" style="left:14px;top:30px;width:34px;height:28px;background:#6a4a30;border-radius:2px;filter:blur(2px);"></div><div class="s" style="left:128px;top:0px;width:64px;height:108px;background:linear-gradient(to right,#d8dccc,#f4f4ec 40%,#e8ece0);border-radius:0;filter:blur(2px);"></div><div class="s" style="left:0px;top:50px;width:148px;height:70px;background:#f0c8c8;border-radius:40% 40% 0 0;filter:blur(2px);"></div><div class="s" style="left:48px;top:0px;width:60px;height:50px;background:#2a2220;border-radius:50% 50% 38% 38%;filter:blur(1.5px);"></div><div class="s" style="left:66.0px;top:46.8px;width:20.0px;height:24.0px;background:#d0a090;border-radius:25%;filter:blur(1.5px);"></div><div class="s" style="left:56px;top:18px;width:40px;height:48px;background:#d0a090;border-radius:46% 46% 50% 50%;filter:blur(1.2px);"></div><div class="s" style="left:64.0px;top:36.24px;width:8.8px;height:3.84px;background:rgba(60,40,35,.45);border-radius:50%;filter:blur(0.8px);"></div><div class="s" style="left:79.2px;top:36.24px;width:8.8px;height:3.84px;background:rgba(60,40,35,.45);border-radius:50%;filter:blur(0.8px);"></div><div class="s" style="left:69.6px;top:52.56px;width:12.8px;height:2.88px;background:rgba(120,50,50,.45);border-radius:50%;filter:blur(0.8px);"></div><div class="s" style="left:60.8px;top:33.4px;width:14.4px;height:8.2px;border:1.2px solid rgba(30,25,25,.75);border-radius:3px"></div><div class="s" style="left:76.8px;top:33.4px;width:14.4px;height:8.2px;border:1.2px solid rgba(30,25,25,.75);border-radius:3px"></div><div class="s" style="left:58px;top:58px;width:36px;height:26px;background:#d84444;border-radius:20% 20% 50% 50%;filter:blur(1.5px);"></div><div class="s" style="left:40px;top:44px;width:20px;height:22px;background:#d8a898;border-radius:50%;filter:blur(2px);"></div><div class="lbl"><svg class="mic" width="16" height="16" viewBox="0 0 16 16"><rect x="6.2" y="1.6" width="5" height="8.4" rx="2.5" fill="#e8475a"/><path d="M4.4 7.4 Q4.4 12 8.7 12 Q13 12 13 7.4 M8.7 12 L8.7 14.2 M6.2 14.4 L11.2 14.4" fill="none" stroke="#d93446" stroke-width="1.3"/><path d="M2.6 14.6 L15 1.4" stroke="#f0a0a8" stroke-width="1.4"/></svg><span>Бобик Лілія</span></div></div><div class="tile" style="left:384px;top:324px;background:linear-gradient(to bottom,#d8d4d0,#d0ccc8 50%,#d4d0cc);"><div class="s" style="left:0px;top:30px;width:192px;height:2px;background:#b8b4b0;border-radius:0;filter:blur(1px);"></div><div class="s" style="left:0px;top:66px;width:192px;height:2px;background:#bcb8b4;border-radius:0;filter:blur(1px);"></div><div class="s" style="left:36px;top:22px;width:100px;height:90px;background:#e8e4e4;border-radius:50% 50% 38% 38%;filter:blur(1.5px);"></div><div class="s" style="left:74.0px;top:81.6px;width:28.0px;height:33.0px;background:#d8baba;border-radius:25%;filter:blur(1.5px);"></div><div class="s" style="left:60px;top:42px;width:56px;height:66px;background:#d8baba;border-radius:46% 46% 50% 50%;filter:blur(2px);"></div><div class="s" style="left:71.2px;top:67.08px;width:12.32px;height:5.28px;background:rgba(60,40,35,.45);border-radius:50%;filter:blur(0.8px);"></div><div class="s" style="left:92.47999999999999px;top:67.08px;width:12.32px;height:5.28px;background:rgba(60,40,35,.45);border-radius:50%;filter:blur(0.8px);"></div><div class="s" style="left:79.04px;top:89.52px;width:17.92px;height:3.96px;background:rgba(120,50,50,.45);border-radius:50%;filter:blur(0.8px);"></div><div class="s" style="left:66.7px;top:63.1px;width:20.2px;height:11.2px;border:1.2px solid rgba(30,25,25,.75);border-radius:3px"></div><div class="s" style="left:89.1px;top:63.1px;width:20.2px;height:11.2px;border:1.2px solid rgba(30,25,25,.75);border-radius:3px"></div><div class="s" style="left:100px;top:96px;width:60px;height:20px;background:#505050;border-radius:50%;filter:blur(3px);"></div><div class="lbl"><svg class="mic" width="16" height="16" viewBox="0 0 16 16"><rect x="6.2" y="1.6" width="5" height="8.4" rx="2.5" fill="#e8475a"/><path d="M4.4 7.4 Q4.4 12 8.7 12 Q13 12 13 7.4 M8.7 12 L8.7 14.2 M6.2 14.4 L11.2 14.4" fill="none" stroke="#d93446" stroke-width="1.3"/><path d="M2.6 14.6 L15 1.4" stroke="#f0a0a8" stroke-width="1.4"/></svg><span>Вікторія Ірклієнко</span></div></div><div class="tile" style="left:576px;top:324px;background:#232323;"><div class="vid" style="left:55px;top:0px;width:81px;height:108px;border-radius:0;background:linear-gradient(to bottom,#dcdcdc,#e4e4e8 40%,#c8ccd4 70%,#5878a8 85%,#a8b0c0)"><div class="s" style="left:0px;top:48px;width:12px;height:6px;background:#fff;border-radius:1px;filter:blur(1px);"></div><div class="s" style="left:60px;top:54px;width:14px;height:6px;background:#fff;border-radius:1px;filter:blur(1px);"></div><div class="s" style="left:10px;top:96px;width:61px;height:30px;background:#b05050;border-radius:42% 42% 0 0;filter:blur(1.5px);"></div><div class="s" style="left:21px;top:37px;width:44px;height:75px;background:#8a6850;border-radius:50% 50% 38% 38%;filter:blur(1.5px);"></div><div class="s" style="left:36.5px;top:70.8px;width:15.0px;height:19.0px;background:#d0a898;border-radius:25%;filter:blur(1.5px);"></div><div class="s" style="left:29px;top:48px;width:30px;height:38px;background:#d0a898;border-radius:46% 46% 50% 50%;filter:blur(1.2px);"></div><div class="s" style="left:35.0px;top:62.44px;width:6.6px;height:3.04px;background:rgba(60,40,35,.45);border-radius:50%;filter:blur(0.8px);"></div><div class="s" style="left:46.4px;top:62.44px;width:6.6px;height:3.04px;background:rgba(60,40,35,.45);border-radius:50%;filter:blur(0.8px);"></div><div class="s" style="left:39.2px;top:75.36px;width:9.6px;height:2.28px;background:rgba(120,50,50,.45);border-radius:50%;filter:blur(0.8px);"></div><div class="s" style="left:32.6px;top:60.2px;width:10.8px;height:6.5px;border:1.2px solid rgba(30,25,25,.75);border-radius:3px"></div><div class="s" style="left:44.6px;top:60.2px;width:10.8px;height:6.5px;border:1.2px solid rgba(30,25,25,.75);border-radius:3px"></div></div><div class="lbl"><svg class="mic" width="16" height="16" viewBox="0 0 16 16"><rect x="6.2" y="1.6" width="5" height="8.4" rx="2.5" fill="#e8475a"/><path d="M4.4 7.4 Q4.4 12 8.7 12 Q13 12 13 7.4 M8.7 12 L8.7 14.2 M6.2 14.4 L11.2 14.4" fill="none" stroke="#d93446" stroke-width="1.3"/><path d="M2.6 14.6 L15 1.4" stroke="#f0a0a8" stroke-width="1.4"/></svg><span>Катерина Мітюхіна</span></div></div><div class="tile" style="left:0px;top:432px;background:linear-gradient(to right,#bcb8b4,#6a5a50 60%,#8a7a70);"><div class="s" style="left:0px;top:0px;width:80px;height:108px;background:#c8c4c0;border-radius:0;filter:blur(8px);"></div><div class="s" style="left:70px;top:-10px;width:130px;height:70px;background:#2a201c;border-radius:50%;filter:blur(8px);"></div><div class="s" style="left:120px;top:60px;width:80px;height:50px;background:#8a7a70;border-radius:50%;filter:blur(8px);"></div><div class="s" style="left:10px;top:40px;width:60px;height:50px;background:#504840;border-radius:50%;filter:blur(8px);"></div><div class="s" style="left:54px;top:84px;width:116px;height:40px;background:#d0e4e8;border-radius:42% 42% 0 0;filter:blur(2px);"></div><div class="s" style="left:89px;top:29px;width:41px;height:30px;background:#d8b8a0;border-radius:50% 50% 38% 38%;filter:blur(1.5px);"></div><div class="s" style="left:89px;top:31px;width:41px;height:53px;background:#d8b8a0;border-radius:46% 46% 50% 50%;filter:blur(1.2px);"></div><div class="s" style="left:97.2px;top:51.14px;width:9.02px;height:4.24px;background:rgba(60,40,35,.45);border-radius:50%;filter:blur(0.8px);"></div><div class="s" style="left:112.78px;top:51.14px;width:9.02px;height:4.24px;background:rgba(60,40,35,.45);border-radius:50%;filter:blur(0.8px);"></div><div class="s" style="left:102.94px;top:69.16px;width:13.120000000000001px;height:3.1799999999999997px;background:rgba(120,50,50,.45);border-radius:50%;filter:blur(0.8px);"></div><div class="lbl"><svg class="mic" width="16" height="16" viewBox="0 0 16 16"><rect x="6.2" y="1.6" width="5" height="8.4" rx="2.5" fill="#e8475a"/><path d="M4.4 7.4 Q4.4 12 8.7 12 Q13 12 13 7.4 M8.7 12 L8.7 14.2 M6.2 14.4 L11.2 14.4" fill="none" stroke="#d93446" stroke-width="1.3"/><path d="M2.6 14.6 L15 1.4" stroke="#f0a0a8" stroke-width="1.4"/></svg><span>Yevhenii Kupriienko</span></div></div><div class="tile" style="left:192px;top:432px;background:linear-gradient(to bottom,#e8e8e8,#dcdcdc);"><div class="s" style="left:16px;top:14px;width:90px;height:80px;background:#ececec;border-radius:0;filter:blur(2px);"></div><div class="s" style="left:114px;top:30px;width:50px;height:80px;background:#7a7a7a;border-radius:0;filter:blur(3px);"></div><div class="s" style="left:166px;top:20px;width:26px;height:88px;background:#d8d8d8;border-radius:0;filter:blur(1px);"></div><div class="s" style="left:150px;top:40px;width:14px;height:68px;background:#e0e0e0;border-radius:0;filter:blur(1px);"></div><div class="s" style="left:48px;top:82px;width:96px;height:40px;background:#d02830;border-radius:42% 42% 0 0;filter:blur(1.5px);"></div><div class="s" style="left:74px;top:34px;width:54px;height:46px;background:#8a5038;border-radius:50% 50% 38% 38%;filter:blur(1.5px);"></div><div class="s" style="left:91.5px;top:71.2px;width:19.0px;height:21.0px;background:#d8a898;border-radius:25%;filter:blur(1.5px);"></div><div class="s" style="left:82px;top:46px;width:38px;height:42px;background:#d8a898;border-radius:46% 46% 50% 50%;filter:blur(1.2px);"></div><div class="s" style="left:89.6px;top:61.96px;width:8.36px;height:3.36px;background:rgba(60,40,35,.45);border-radius:50%;filter:blur(0.8px);"></div><div class="s" style="left:104.03999999999999px;top:61.96px;width:8.36px;height:3.36px;background:rgba(60,40,35,.45);border-radius:50%;filter:blur(0.8px);"></div><div class="s" style="left:94.92px;top:76.24px;width:12.16px;height:2.52px;background:rgba(120,50,50,.45);border-radius:50%;filter:blur(0.8px);"></div><div class="s" style="left:86.6px;top:59.4px;width:13.7px;height:7.1px;border:1.2px solid rgba(30,25,25,.75);border-radius:3px"></div><div class="s" style="left:101.8px;top:59.4px;width:13.7px;height:7.1px;border:1.2px solid rgba(30,25,25,.75);border-radius:3px"></div><div class="lbl"><svg class="mic" width="16" height="16" viewBox="0 0 16 16"><rect x="6.2" y="1.6" width="5" height="8.4" rx="2.5" fill="#e8475a"/><path d="M4.4 7.4 Q4.4 12 8.7 12 Q13 12 13 7.4 M8.7 12 L8.7 14.2 M6.2 14.4 L11.2 14.4" fill="none" stroke="#d93446" stroke-width="1.3"/><path d="M2.6 14.6 L15 1.4" stroke="#f0a0a8" stroke-width="1.4"/></svg><span>Галина Яценко</span></div></div><div class="tile" style="left:384px;top:432px;background:#232323;"><div class="vid" style="left:24px;top:0px;width:144px;height:108px;border-radius:0;background:linear-gradient(to bottom,#e6e2d0,#dcd8c4 60%,#c8b8a0)"><div class="s" style="left:0px;top:16px;width:54px;height:68px;background:#8a6040;border-radius:1px;filter:blur(1px);"></div><div class="s" style="left:3px;top:22px;width:48px;height:60px;background:repeating-linear-gradient(to bottom,#8898a8 0 8px,#6a5a48 8px 10px);border-radius:0;filter:blur(1px);"></div><div class="s" style="left:78px;top:13px;width:26px;height:34px;background:#d84838;border-radius:1px;filter:blur(1px);"></div><div class="s" style="left:104px;top:50px;width:28px;height:40px;background:#c8c0c8;border-radius:2px;filter:blur(2px);"></div><div class="s" style="left:20px;top:60px;width:16px;height:30px;background:#203050;border-radius:2px;filter:blur(1px);"></div><div class="s" style="left:30px;top:84px;width:90px;height:40px;background:#2a2828;border-radius:42% 42% 0 0;filter:blur(1.5px);"></div><div class="s" style="left:48px;top:35px;width:54px;height:43px;background:#2a2220;border-radius:50% 50% 38% 38%;filter:blur(1.5px);"></div><div class="s" style="left:64.5px;top:72.8px;width:21.0px;height:19.0px;background:#d0a090;border-radius:25%;filter:blur(1.5px);"></div><div class="s" style="left:54px;top:50px;width:42px;height:38px;background:#d0a090;border-radius:46% 46% 50% 50%;filter:blur(1.2px);"></div><div class="s" style="left:62.4px;top:64.44px;width:9.24px;height:3.04px;background:rgba(60,40,35,.45);border-radius:50%;filter:blur(0.8px);"></div><div class="s" style="left:78.36px;top:64.44px;width:9.24px;height:3.04px;background:rgba(60,40,35,.45);border-radius:50%;filter:blur(0.8px);"></div><div class="s" style="left:68.28px;top:77.36px;width:13.44px;height:2.28px;background:rgba(120,50,50,.45);border-radius:50%;filter:blur(0.8px);"></div><div class="s" style="left:59.0px;top:62.2px;width:15.1px;height:6.5px;border:1.2px solid rgba(30,25,25,.75);border-radius:3px"></div><div class="s" style="left:75.8px;top:62.2px;width:15.1px;height:6.5px;border:1.2px solid rgba(30,25,25,.75);border-radius:3px"></div></div><div class="lbl"><svg class="mic" width="16" height="16" viewBox="0 0 16 16"><rect x="6.2" y="1.6" width="5" height="8.4" rx="2.5" fill="#e8475a"/><path d="M4.4 7.4 Q4.4 12 8.7 12 Q13 12 13 7.4 M8.7 12 L8.7 14.2 M6.2 14.4 L11.2 14.4" fill="none" stroke="#d93446" stroke-width="1.3"/><path d="M2.6 14.6 L15 1.4" stroke="#f0a0a8" stroke-width="1.4"/></svg><span>Нелли Громова</span></div></div><div class="tile" style="left:576px;top:432px;background:#232323;"><div class="vid" style="left:65px;top:0px;width:61px;height:108px;border-radius:0;background:linear-gradient(to bottom,#ece8e0,#e4e0d4)"><div class="s" style="left:29px;top:30px;width:32px;height:78px;background:#d8a878;border-radius:0;filter:blur(1px);"></div><div class="s" style="left:29px;top:58px;width:32px;height:4px;background:#b88860;border-radius:0;filter:blur(1px);"></div><div class="s" style="left:0px;top:52px;width:31px;height:60px;background:#1a1818;border-radius:30% 50% 0 0;filter:blur(2px);"></div><div class="s" style="left:-4px;top:12px;width:31px;height:40px;background:#d8d0c0;border-radius:50% 50% 38% 38%;filter:blur(1.5px);"></div><div class="s" style="left:5.75px;top:46.0px;width:11.5px;height:20.0px;background:#d8b8a8;border-radius:25%;filter:blur(1.5px);"></div><div class="s" style="left:0px;top:22px;width:23px;height:40px;background:#d8b8a8;border-radius:46% 46% 50% 50%;filter:blur(1.2px);"></div><div class="s" style="left:4.6000000000000005px;top:37.2px;width:5.06px;height:3.2px;background:rgba(60,40,35,.45);border-radius:50%;filter:blur(0.8px);"></div><div class="s" style="left:13.34px;top:37.2px;width:5.06px;height:3.2px;background:rgba(60,40,35,.45);border-radius:50%;filter:blur(0.8px);"></div><div class="s" style="left:7.82px;top:50.8px;width:7.36px;height:2.4px;background:rgba(120,50,50,.45);border-radius:50%;filter:blur(0.8px);"></div></div><div class="lbl"><svg class="mic" width="16" height="16" viewBox="0 0 16 16"><rect x="6.2" y="1.6" width="5" height="8.4" rx="2.5" fill="#e8475a"/><path d="M4.4 7.4 Q4.4 12 8.7 12 Q13 12 13 7.4 M8.7 12 L8.7 14.2 M6.2 14.4 L11.2 14.4" fill="none" stroke="#d93446" stroke-width="1.3"/><path d="M2.6 14.6 L15 1.4" stroke="#f0a0a8" stroke-width="1.4"/></svg><span>Наталія Свириденко</span></div></div><div class="tile" style="left:0px;top:540px;background:#232323;"><div class="vid" style="left:65px;top:0px;width:61px;height:108px;border-radius:0;background:linear-gradient(to bottom,#f0e4e0,#ecdcd8)"><div class="s" style="left:2px;top:20px;width:16px;height:16px;background:#8a7a60;border-radius:1px;filter:blur(1px);"></div><div class="s" style="left:24px;top:20px;width:20px;height:12px;background:#8a7a60;border-radius:1px;filter:blur(1px);"></div><div class="s" style="left:0px;top:40px;width:10px;height:24px;background:#6a5a48;border-radius:1px;filter:blur(1px);"></div><div class="s" style="left:24px;top:34px;width:20px;height:18px;background:#9a8a70;border-radius:1px;filter:blur(1px);"></div><div class="s" style="left:1px;top:50px;width:54px;height:60px;background:#5a3a30;border-radius:50% 50% 38% 38%;filter:blur(1.5px);"></div><div class="s" style="left:20.0px;top:88.0px;width:18.0px;height:25.0px;background:#c89888;border-radius:25%;filter:blur(1.5px);"></div><div class="s" style="left:11px;top:58px;width:36px;height:50px;background:#c89888;border-radius:46% 46% 50% 50%;filter:blur(1.2px);"></div><div class="s" style="left:18.2px;top:77.0px;width:7.92px;height:4.0px;background:rgba(60,40,35,.45);border-radius:50%;filter:blur(0.8px);"></div><div class="s" style="left:31.88px;top:77.0px;width:7.92px;height:4.0px;background:rgba(60,40,35,.45);border-radius:50%;filter:blur(0.8px);"></div><div class="s" style="left:23.240000000000002px;top:94.0px;width:11.52px;height:3.0px;background:rgba(120,50,50,.45);border-radius:50%;filter:blur(0.8px);"></div></div><div class="lbl"><svg class="mic" width="16" height="16" viewBox="0 0 16 16"><rect x="6.2" y="1.6" width="5" height="8.4" rx="2.5" fill="#e8475a"/><path d="M4.4 7.4 Q4.4 12 8.7 12 Q13 12 13 7.4 M8.7 12 L8.7 14.2 M6.2 14.4 L11.2 14.4" fill="none" stroke="#d93446" stroke-width="1.3"/><path d="M2.6 14.6 L15 1.4" stroke="#f0a0a8" stroke-width="1.4"/></svg><span>Марія Євгеньєва</span></div></div><div class="tile" style="left:192px;top:540px;background:#232323;"><div class="vid" style="left:65px;top:0px;width:61px;height:108px;border-radius:0;background:linear-gradient(to bottom,#b8b8bc,#c0c0c4 50%,#b4b4b8)"><div class="s" style="left:5px;top:86px;width:56px;height:30px;background:#2a2a2a;border-radius:42% 42% 0 0;filter:blur(1.5px);"></div><div class="s" style="left:17px;top:33px;width:42px;height:80px;background:#8a6a58;border-radius:50% 50% 38% 38%;filter:blur(1.5px);"></div><div class="s" style="left:34.0px;top:65.6px;width:14.0px;height:18.0px;background:#d8b8a8;border-radius:25%;filter:blur(1.5px);"></div><div class="s" style="left:27px;top:44px;width:28px;height:36px;background:#d8b8a8;border-radius:46% 46% 50% 50%;filter:blur(1.2px);"></div><div class="s" style="left:32.6px;top:57.68px;width:6.16px;height:2.88px;background:rgba(60,40,35,.45);border-radius:50%;filter:blur(0.8px);"></div><div class="s" style="left:43.239999999999995px;top:57.68px;width:6.16px;height:2.88px;background:rgba(60,40,35,.45);border-radius:50%;filter:blur(0.8px);"></div><div class="s" style="left:36.52px;top:69.92px;width:8.96px;height:2.16px;background:rgba(120,50,50,.45);border-radius:50%;filter:blur(0.8px);"></div></div><div class="lbl"><svg class="mic" width="16" height="16" viewBox="0 0 16 16"><rect x="6.2" y="1.6" width="5" height="8.4" rx="2.5" fill="#e8475a"/><path d="M4.4 7.4 Q4.4 12 8.7 12 Q13 12 13 7.4 M8.7 12 L8.7 14.2 M6.2 14.4 L11.2 14.4" fill="none" stroke="#d93446" stroke-width="1.3"/><path d="M2.6 14.6 L15 1.4" stroke="#f0a0a8" stroke-width="1.4"/></svg><span>Безпала Софія</span></div></div><div class="tile" style="left:384px;top:540px;background:#232323;"><div class="vid" style="left:55px;top:0px;width:81px;height:108px;border-radius:0;background:linear-gradient(to bottom,#d0d0d4,#d4d4d8 50%,#c0c4c8)"><div class="s" style="left:40px;top:24px;width:18px;height:8px;background:#fff;border-radius:1px;filter:blur(1px);"></div><div class="s" style="left:0px;top:30px;width:21px;height:56px;background:#2a4070;border-radius:0 20% 0 0;filter:blur(2px);"></div><div class="s" style="left:0px;top:82px;width:81px;height:30px;background:#5a4030;border-radius:30% 30% 0 0;filter:blur(2px);"></div><div class="s" style="left:17px;top:38px;width:44px;height:75px;background:#4a3028;border-radius:50% 50% 38% 38%;filter:blur(1.5px);"></div><div class="s" style="left:31.5px;top:68.8px;width:15.0px;height:19.0px;background:#d8b0a0;border-radius:25%;filter:blur(1.5px);"></div><div class="s" style="left:24px;top:46px;width:30px;height:38px;background:#d8b0a0;border-radius:46% 46% 50% 50%;filter:blur(1.2px);"></div><div class="s" style="left:30.0px;top:60.44px;width:6.6px;height:3.04px;background:rgba(60,40,35,.45);border-radius:50%;filter:blur(0.8px);"></div><div class="s" style="left:41.4px;top:60.44px;width:6.6px;height:3.04px;background:rgba(60,40,35,.45);border-radius:50%;filter:blur(0.8px);"></div><div class="s" style="left:34.2px;top:73.36px;width:9.6px;height:2.28px;background:rgba(120,50,50,.45);border-radius:50%;filter:blur(0.8px);"></div></div><div class="lbl"><svg class="mic" width="16" height="16" viewBox="0 0 16 16"><rect x="6.2" y="1.6" width="5" height="8.4" rx="2.5" fill="#e8475a"/><path d="M4.4 7.4 Q4.4 12 8.7 12 Q13 12 13 7.4 M8.7 12 L8.7 14.2 M6.2 14.4 L11.2 14.4" fill="none" stroke="#d93446" stroke-width="1.3"/><path d="M2.6 14.6 L15 1.4" stroke="#f0a0a8" stroke-width="1.4"/></svg><span>Анастасія Прийма</span></div></div><div class="tile" style="left:576px;top:540px;background:linear-gradient(to right,#c0a888,#c8b090 20%,#c8c0b0);"><div class="s" style="left:16px;top:0px;width:72px;height:108px;background:linear-gradient(to right,#e8dcc0,#f4f0e4 50%,#e8e0c8);border-radius:0;filter:blur(3px);"></div><div class="s" style="left:88px;top:0px;width:8px;height:108px;background:#d8d0c0;border-radius:0;filter:blur(2px);"></div><div class="s" style="left:96px;top:10px;width:96px;height:98px;background:#c8c0b0;border-radius:0;filter:blur(2px);"></div><div class="s" style="left:144px;top:66px;width:30px;height:22px;background:#2a2a28;border-radius:50%;filter:blur(1.5px);"></div><div class="s" style="left:120px;top:70px;width:20px;height:16px;background:#2a2a28;border-radius:50%;filter:blur(1.5px);"></div><div class="s" style="left:40px;top:84px;width:120px;height:40px;background:#302a30;border-radius:42% 42% 0 0;filter:blur(1.5px);"></div><div class="s" style="left:64px;top:16px;width:64px;height:76px;background:#2a2020;border-radius:50% 50% 38% 38%;filter:blur(1.5px);"></div><div class="s" style="left:85.5px;top:62.4px;width:23.0px;height:27.0px;background:#d8a898;border-radius:25%;filter:blur(1.5px);"></div><div class="s" style="left:74px;top:30px;width:46px;height:54px;background:#d8a898;border-radius:46% 46% 50% 50%;filter:blur(1.2px);"></div><div class="s" style="left:83.2px;top:50.519999999999996px;width:10.12px;height:4.32px;background:rgba(60,40,35,.45);border-radius:50%;filter:blur(0.8px);"></div><div class="s" style="left:100.68px;top:50.519999999999996px;width:10.12px;height:4.32px;background:rgba(60,40,35,.45);border-radius:50%;filter:blur(0.8px);"></div><div class="s" style="left:89.64px;top:68.88px;width:14.72px;height:3.2399999999999998px;background:rgba(120,50,50,.45);border-radius:50%;filter:blur(0.8px);"></div><div class="lbl"><svg class="mic" width="16" height="16" viewBox="0 0 16 16"><rect x="6.2" y="1.6" width="5" height="8.4" rx="2.5" fill="#e8475a"/><path d="M4.4 7.4 Q4.4 12 8.7 12 Q13 12 13 7.4 M8.7 12 L8.7 14.2 M6.2 14.4 L11.2 14.4" fill="none" stroke="#d93446" stroke-width="1.3"/><path d="M2.6 14.6 L15 1.4" stroke="#f0a0a8" stroke-width="1.4"/></svg><span>Цепух Ірина Олександрівна</span></div></div><div class="s" style="left:191px;top:107px;width:194px;height:110.5px;border:2.8px solid #45d890"></div></div>
<div class="abs" style="left:1113px;top:496px;width:4px;height:40px;background:#6a9298"></div>
<div class="abs" style="left:1483px;top:842px;width:73px;height:34px;background:#0e0e0e;border-radius:0 0 2px 2px"></div>
<svg class="abs" style="left:1512px;top:853.5px" width="16" height="10" viewBox="0 0 16 10"><path d="M1.6 1.8 L8 8 L14.4 1.8" fill="none" stroke="#a8a8a8" stroke-width="1.8"/></svg>
<svg class="abs" style="left:38px;top:989px" width="28" height="28" viewBox="0 0 28 28" fill="none" stroke="#f2f6f6" stroke-width="1.5">
<rect x="10.3" y="2" width="7.4" height="14" rx="3.7"/><path d="M6.5 11.5 Q6.5 20 14 20 Q21.5 20 21.5 11.5"/><path d="M14 20 L14 25 M10 25.2 L18 25.2"/>
<path d="M3 25 L24.5 2.6" stroke="#e02461" stroke-width="2.2"/></svg>
<svg class="abs" style="left:79px;top:999px" width="10" height="8" viewBox="0 0 10 8"><path d="M1.2 6 L5 2.2 L8.8 6" fill="none" stroke="#f2f6f6" stroke-width="1.5"/></svg>
<div class="abs tl" style="left:-7.799999999999997px;top:1019px;width:120px;font-size:12.5px">Звук</div>
<svg class="abs" style="left:131px;top:989px" width="28" height="28" viewBox="0 0 28 28" fill="none" stroke="#f2f6f6" stroke-width="1.5">
<rect x="2.2" y="6.2" width="17" height="14.2" rx="3"/><path d="M19.2 11 L25.5 6.6 L25.5 20 L19.2 15.6"/>
<path d="M2 25.5 L24 3.5" stroke="#e02461" stroke-width="2.2"/></svg>
<svg class="abs" style="left:177px;top:999px" width="10" height="8" viewBox="0 0 10 8"><path d="M1.2 6 L5 2.2 L8.8 6" fill="none" stroke="#f2f6f6" stroke-width="1.5"/></svg>
<div class="abs tl" style="left:85.19999999999999px;top:1019px;width:120px;font-size:12.5px">Видео</div>
<svg class="abs" style="left:753px;top:993px" width="22" height="22" viewBox="0 0 22 22" fill="none" stroke="#f2f6f6" stroke-width="1.7"><circle cx="7.1" cy="4.8" r="2.3"/><circle cx="14.9" cy="7.8" r="2.3"/><rect x="10.3" y="12.6" width="9.6" height="6.4" rx="3.2"/><path d="M11.4 10.6 Q4.2 9.8 3.9 14.8 Q3.9 18.8 7.4 18.9 L10.3 18.9"/></svg>
<div class="abs" style="left:780px;top:994px;font-size:11.5px;line-height:13px;color:#aebfbf">80</div>
<svg class="abs" style="left:812px;top:999px" width="10" height="8" viewBox="0 0 10 8"><path d="M1.2 6 L5 2.2 L8.8 6" fill="none" stroke="#f2f6f6" stroke-width="1.5"/></svg>
<div class="abs tl" style="left:704.3px;top:1019px;width:120px;font-size:12.5px">Участники</div>
<svg class="abs" style="left:862px;top:993px" width="24" height="22" viewBox="0 0 24 22" fill="none" stroke="#f2f6f6" stroke-width="1.4">
<path d="M4.5 1.5 L18.8 1.5 Q22.3 1.5 22.3 5 L22.3 12 Q22.3 15.5 18.8 15.5 L9.5 15.5 L4.6 19.6 L4.6 15.5 Q1.2 15.4 1.2 12 L1.2 5 Q1.2 1.5 4.5 1.5 Z"/></svg>
<svg class="abs" style="left:902px;top:999px" width="10" height="8" viewBox="0 0 10 8"><path d="M1.2 6 L5 2.2 L8.8 6" fill="none" stroke="#f2f6f6" stroke-width="1.5"/></svg>
<div class="abs tl" style="left:813.8px;top:1019px;width:120px;font-size:12.5px">Чат</div>
<svg class="abs" style="left:954px;top:992px" width="28" height="23" viewBox="0 0 28 23" fill="none" stroke="#f2f6f6" stroke-width="1.4">
<path d="M13.5 21.2 L4.2 12.4 Q0.8 8.8 2.6 4.8 Q4.8 1 9 1.6 Q11.6 2 13.6 4.9 Q15.8 1.6 19.8 1.6 Q24.6 2 25.4 6.8 Q25.8 10 23.2 12.6 Z"/></svg>
<svg class="abs" style="left:1001px;top:999px" width="10" height="8" viewBox="0 0 10 8"><path d="M1.2 6 L5 2.2 L8.8 6" fill="none" stroke="#f2f6f6" stroke-width="1.5"/></svg>
<div class="abs tl" style="left:908.6px;top:1019px;width:120px;font-size:12.5px">Отреагировать</div>
<svg class="abs" style="left:1053px;top:992px" width="28" height="22" viewBox="0 0 28 22" fill="none" stroke="#f2f6f6" stroke-width="1.5">
<rect x="2.6" y="2.8" width="22.8" height="17" rx="2.6"/><path d="M14 16 L14 7 M10.4 10.4 L14 6.8 L17.6 10.4" stroke-width="1.8"/></svg>
<svg class="abs" style="left:1099px;top:999px" width="10" height="8" viewBox="0 0 10 8"><path d="M1.2 6 L5 2.2 L8.8 6" fill="none" stroke="#f2f6f6" stroke-width="1.5"/></svg>
<div class="abs tl" style="left:1007.5px;top:1019px;width:120px;font-size:12.5px">Поделиться</div>
<div class="abs" style="left:1128px;top:1000px;width:1px;height:22px;background:#5f8c8f"></div>
<svg class="abs" style="left:1169px;top:991.5px" width="23" height="23" viewBox="0 0 23 23" fill="none" stroke="#f2f6f6" stroke-width="1.6" stroke-linejoin="round"><path d="M21.58 8.93 L21.58 14.07 L18.65 14.86 L18.93 14.17 L20.44 16.81 L16.81 20.44 L14.17 18.93 L14.86 18.65 L14.07 21.58 L8.93 21.58 L8.14 18.65 L8.83 18.93 L6.19 20.44 L2.56 16.81 L4.07 14.17 L4.35 14.86 L1.42 14.07 L1.42 8.93 L4.35 8.14 L4.07 8.83 L2.56 6.19 L6.19 2.56 L8.83 4.07 L8.14 4.35 L8.93 1.42 L14.07 1.42 L14.86 4.35 L14.17 4.07 L16.81 2.56 L20.44 6.19 L18.93 8.83 L18.65 8.14 Z"/><circle cx="11.5" cy="11.5" r="2.9"/></svg>
<div class="abs tl" style="left:1121.5px;top:1019px;width:120px;font-size:12.5px">Настройки</div>
<svg class="abs" style="left:1260px;top:990px" width="26" height="26" viewBox="0 0 26 26"><circle cx="13" cy="13" r="11.6" fill="none" stroke="#f2f6f6" stroke-width="1.4"/><circle cx="8.2" cy="13" r="1.5" fill="#f2f6f6"/><circle cx="13" cy="13" r="1.5" fill="#f2f6f6"/><circle cx="17.8" cy="13" r="1.5" fill="#f2f6f6"/></svg>
<div class="abs tl" style="left:1213.6px;top:1019px;width:120px;font-size:12.5px">Дополнительно</div>
<svg class="abs" style="left:1858px;top:988px" width="30" height="30" viewBox="0 0 30 30">
<defs><linearGradient id="dg" x1="0" y1="0" x2="1" y2="0.3"><stop offset="0" stop-color="#e8175d" stop-opacity=".35"/><stop offset=".5" stop-color="#e8175d"/></linearGradient></defs>
<path d="M11.5 2.3 L25.8 2.3 L25.8 24.8 L18.8 26 L18.8 7.8 L25.2 3" fill="none" stroke="url(#dg)" stroke-width="1.6" stroke-linejoin="round"/>
<g fill="none" stroke="#f2f6f6" stroke-width="1.5" stroke-linejoin="round"><circle cx="10.8" cy="8.6" r="2.5"/><path d="M8.4 12.6 L12.8 12.6 Q15.2 13.8 16.8 17.4 L15.2 18.6 L13.6 16.4 L13.6 20.2 L14.8 26.2 L12.4 26.6 L11 21.6 L7.8 26.2 L5.8 25 L9.2 19.4 L9.2 16.2 L7.2 18.6 L5.6 17.4 Q6.8 13.8 8.4 12.6 Z"/></g></svg>
<div class="abs tl" style="left:1811.8px;top:1019px;width:120px;font-size:12.5px">Выйти</div>
<div class="abs" style="left:0;top:1038.7px;width:263px;height:1.3px;background:#0c1416"></div>
<div class="abs" style="left:263px;top:1038.7px;width:938px;height:1.3px;background:#e8f6f6"></div>
<div class="abs" style="left:1201px;top:1038.7px;width:719px;height:1.3px;background:#0c1416"></div>
<div id="task" class="abs">
<div class="abs" style="left:0;top:0;width:48px;height:40px;background:#1d2326"></div>
<svg class="abs" style="left:15.5px;top:11.5px" width="17" height="17" viewBox="0 0 17 17" fill="#fff"><path d="M0 2.4 L7.3 1.3 L7.3 8 L0 8 Z M8.3 1.2 L17 0 L17 8 L8.3 8 Z M0 9 L7.3 9 L7.3 15.7 L0 14.6 Z M8.3 9 L17 9 L17 17 L8.3 15.8 Z"/></svg>
<div class="abs" style="left:48px;top:0;width:288px;height:40px;background:#f0f0f0"></div>
<svg class="abs" style="left:59px;top:12px" width="19" height="17" viewBox="0 0 19 17" fill="none" stroke="#2a2a2a" stroke-width="1.4"><circle cx="11.6" cy="6.6" r="5.4"/><path d="M7.8 10.4 L1.2 16.4"/></svg>
<div class="abs" style="left:88px;top:12px;font-size:15.2px;line-height:17px;color:#363636">Поиск</div>
<div class="abs" style="left:336px;top:0;width:1584px;height:40px;background:linear-gradient(to right,#372a22 0px,#3a2b24 164px,#36292a 304px,#3b2d24 464px,#382a22 664px,#2f2e22 724px,#2a2c20 774px,#231f1c 834px,#2a2e20 904px,#2e3022 994px,#2a2622 1064px,#2e2322 1134px,#3a2e2a 1204px,#463a32 1284px,#3e342c 1364px,#3c332d 1584px)"></div>
<div class="abs" style="left:535px;top:0;width:44px;height:40px;background:#52463e"></div>
<div class="abs" style="left:343px;top:37px;width:40px;height:3px;background:#8ec6ee"></div>
<div class="abs" style="left:441px;top:37px;width:40px;height:3px;background:#8ec6ee"></div>
<div class="abs" style="left:490px;top:37px;width:40px;height:3px;background:#8ec6ee"></div>
<div class="abs" style="left:535px;top:37px;width:44px;height:3px;background:#8ec6ee"></div>
<div class="abs" style="left:588px;top:37px;width:40px;height:3px;background:#8ec6ee"></div>
<svg class="abs" style="left:351px;top:10px" width="23" height="19" viewBox="0 0 23 19"><path d="M0.5 1.5 Q0.5 0.5 1.5 0.5 L8 0.5 L10 2.6 L21.5 2.6 Q22.5 2.6 22.5 3.6 L22.5 18.5 L0.5 18.5 Z" fill="#f2c14e"/><rect x="0.5" y="5" width="22" height="13.5" fill="#fcd462"/><path d="M5 18.5 L5 11.8 L18 11.8 L18 18.5 L14 18.5 L14 15 L9 15 L9 18.5 Z" fill="#2e8fd8"/></svg>
<svg class="abs" style="left:399px;top:7.5px" width="26" height="25" viewBox="0 0 26 25"><circle cx="12.8" cy="12.4" r="12.2" fill="#77b64a"/><circle cx="12.8" cy="12.4" r="10.6" fill="#85c04f"/><path d="M6.6 6.4 L9.8 6.4 L9.8 14 Q9.8 16.4 12.4 16.4 Q15 16.4 15 14 L15 6.4 L18.4 6.4 L18.4 19.5 L15.4 19.5 L15.3 18.2 Q14 19.8 11.6 19.8 Q10.6 19.8 9.8 19.4 L9.8 22.5 L6.6 22.5 Z" fill="#fff"/></svg>
<svg class="abs" style="left:448.5px;top:7.5px" width="26" height="25" viewBox="0 0 26 25"><circle cx="12.6" cy="12.4" r="12" fill="#de4436"/><path d="M12.6 12.4 L1.4 8.2 A12 12 0 0 0 10.4 24.2 Z" fill="#30a752"/><path d="M12.6 12.4 L10.4 24.2 A12 12 0 0 0 24.6 12 L23.8 7.6 Z" fill="#f8c42a"/><circle cx="12.6" cy="12.4" r="5.6" fill="#fff"/><circle cx="12.6" cy="12.4" r="4.4" fill="#4385f3"/><circle cx="17.5" cy="18.2" r="6" fill="#d8dde0"/><circle cx="17.5" cy="16.5" r="2.6" fill="#2a2420"/><path d="M12.6 23.2 Q13.4 19.6 17.5 19.6 Q21.6 19.6 22.4 23.2 Z" fill="#3a3a3a"/></svg>
<svg class="abs" style="left:497px;top:7.5px" width="28" height="27" viewBox="0 0 28 27"><path d="M12.6 1 Q23.8 1 23.8 11.2 Q23.8 20.4 14 21 L9.4 24.6 L9.4 20.6 Q1.6 18.6 1.6 11.2 Q1.6 1 12.6 1 Z" fill="#b49ae8"/><path d="M12.6 2.6 Q22.2 2.6 22.2 11.2 Q22.2 19 13.4 19.4 L10.8 21.6 L10.8 19.2 Q3.2 17.6 3.2 11.2 Q3.2 2.6 12.6 2.6 Z" fill="#7f56c8"/><path d="M8 6.4 Q9.2 5.6 10 7 L11 9 Q10.4 10.2 11.2 11.6 Q12.6 13.6 14.2 14 L15.4 13.4 L17.2 14.8 Q17.6 15.8 16.2 16.6 Q13 17 9.8 13.2 Q7 9.6 8 6.4 Z" fill="#fff"/><circle cx="21" cy="20" r="6.6" fill="#e8322d"/><text x="21" y="23.8" font-family="Liberation Sans" font-size="10" fill="#fff" text-anchor="middle">11</text></svg>
<svg class="abs" style="left:546px;top:7.5px" width="26" height="25" viewBox="0 0 26 25"><circle cx="12.6" cy="12.4" r="12.4" fill="#0b5cff"/><circle cx="12.6" cy="12.4" r="11" fill="#1e6df6"/><text x="12.6" y="16" font-family="Liberation Sans" font-weight="bold" font-size="11" fill="#fff" text-anchor="middle" letter-spacing="-0.5">zm</text></svg>
<svg class="abs" style="left:595px;top:8px" width="24" height="24" viewBox="0 0 24 24"><rect x="7" y="1.5" width="16" height="20" rx="1" fill="#e8eef6"/><g stroke="#5b7fbf" stroke-width="1"><path d="M12 5 L21 5 M12 8 L21 8 M12 11 L21 11 M12 14 L21 14 M12 17 L21 17"/></g><path d="M0.6 3.4 L13 1 L13 23 L0.6 20.6 Z" fill="#2b579a"/><text x="6.6" y="15.6" font-family="Liberation Sans" font-weight="bold" font-size="9" fill="#fff" text-anchor="middle">W</text></svg>
<svg class="abs" style="left:1674px;top:14px" width="14" height="10" viewBox="0 0 14 10"><path d="M1.5 8.2 L7 2.6 L12.5 8.2" fill="none" stroke="#f0f0f0" stroke-width="1.3"/></svg>
<svg class="abs" style="left:1697px;top:11px" width="14" height="18" viewBox="0 0 14 18"><rect x="4" y="0.8" width="6" height="11" rx="3" fill="#f6f6f6"/><path d="M1.6 8 Q1.6 13.4 7 13.4 Q12.4 13.4 12.4 8 M7 13.4 L7 16.4 M4 16.6 L10 16.6" fill="none" stroke="#f0f0f0" stroke-width="1.1"/></svg>
<svg class="abs" style="left:1720px;top:13px" width="18" height="15" viewBox="0 0 18 15" fill="none" stroke="#f0f0f0" stroke-width="1.1"><rect x="3.6" y="1.6" width="13.4" height="9.2"/><path d="M10.2 10.8 L10.2 13.8 M6.8 13.8 L13.6 13.8 M0.8 1 L0.8 12.6 M0.6 1 L3.6 1 L3.6 4 L0.6 4"/></svg>
<svg class="abs" style="left:1744px;top:13px" width="18" height="15" viewBox="0 0 18 15" fill="none" stroke="#f0f0f0" stroke-width="1.1"><path d="M1 5 L3.8 5 L7.4 1.8 L7.4 12.6 L3.8 9.6 L1 9.6 Z"/><path d="M9.6 5 Q10.8 7.3 9.6 9.6 M11.8 3.4 Q14 7.3 11.8 11.2 M14 1.8 Q17 7.3 14 12.8"/></svg>
<div class="abs" style="left:1771px;top:13px;font-size:11.8px;line-height:13px;color:#f4f4f4;letter-spacing:-0.4px">ENG</div>
<div class="abs" style="left:1800px;top:4px;width:68px;text-align:center;font-size:11.8px;line-height:13px;color:#f4f4f4;letter-spacing:-0.3px">15:09</div>
<div class="abs" style="left:1800px;top:22px;width:68px;text-align:center;font-size:11.8px;line-height:13px;color:#f4f4f4;letter-spacing:-0.4px">17.03.2026</div>
<svg class="abs" style="left:1877px;top:11px" width="28" height="28" viewBox="0 0 28 28"><path d="M1.6 1.6 L18.2 1.6 L18.2 13.2 L8.8 13.2 L5.8 16 L5.8 13.2 L1.6 13.2 Z" fill="#f4f4f4"/><g stroke="#3b302a" stroke-width="1"><path d="M4.4 5 L15.4 5 M4.4 7.6 L15.4 7.6 M4.4 10.2 L12.6 10.2"/></g><circle cx="17.2" cy="16" r="7.4" fill="#3b302a" stroke="#888" stroke-width="1"/><text x="17.2" y="20.2" font-family="Liberation Sans" font-size="11.5" fill="#fff" text-anchor="middle">3</text></svg>
<div class="abs" style="left:1914px;top:0;width:1px;height:40px;background:#6a625c"></div>
</div>
</body></html>
